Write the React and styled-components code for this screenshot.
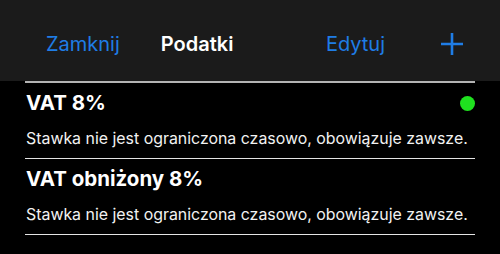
import styled, { createGlobalStyle } from 'styled-components';

const GlobalStyle = createGlobalStyle`
  html, body {
    margin: 0;
    padding: 0;
    background: #000000;
  }
  body {
    font-family: Inter, 'Noto Sans', sans-serif;
    -webkit-font-smoothing: antialiased;
  }
`;

const Page = styled.div`
  width: 500px;
  height: 254px;
  background: #000000;
  overflow: hidden;
`;

const NavBar = styled.div`
  height: 81px;
  box-sizing: border-box;
  padding: 6px 37px 0 46px;
  background: #1b1b1b;
  display: flex;
  align-items: center;
`;

const NavButton = styled.button`
  background: none;
  border: none;
  padding: 0;
  margin-left: ${p => p.$gap || 0};
  font-family: inherit;
  font-size: 20px;
  line-height: 24px;
  color: #1f7de6;
  cursor: pointer;
  display: flex;
  align-items: center;
`;

const NavTitle = styled.div`
  margin-left: 41px;
  margin-right: auto;
  font-size: 20px;
  line-height: 24px;
  font-weight: 600;
  color: #ffffff;
`;

const List = styled.div`
  margin: 0 25px;
  border-top: 2px solid #b4b4b4;
`;

const Row = styled.div`
  padding: 8px 0 9px 1px;
  border-bottom: 1.5px solid #e4e4e4;
`;

const RowHead = styled.div`
  display: flex;
  align-items: center;
  justify-content: space-between;
`;

const RowTitle = styled.div`
  font-size: 20.5px;
  line-height: 24px;
  font-weight: 700;
  color: #ffffff;
`;

const StatusDot = styled.span`
  width: 15px;
  height: 15px;
  border-radius: 50%;
  background: #1fe11f;
`;

const RowText = styled.div`
  margin-top: 14px;
  font-size: 15.9px;
  line-height: 20px;
  color: #f2f2f2;
  white-space: nowrap;
`;

const PlusIcon = () => (
  <svg width="22" height="22" viewBox="0 0 22 22">
    <path d="M11 0v22M0 11h22" stroke="#1f7de6" strokeWidth="2.6" fill="none" />
  </svg>
);

const rates = [
  { name: 'VAT 8%', active: true },
  { name: 'VAT obniżony 8%', active: false },
];

export default function App() {
  return (
    <Page>
      <GlobalStyle />
      <NavBar>
        <NavButton>Zamknij</NavButton>
        <NavTitle>Podatki</NavTitle>
        <NavButton>Edytuj</NavButton>
        <NavButton $gap="56px"><PlusIcon /></NavButton>
      </NavBar>
      <List>
        {rates.map(r => (
          <Row key={r.name}>
            <RowHead>
              <RowTitle>{r.name}</RowTitle>
              {r.active && <StatusDot />}
            </RowHead>
            <RowText>Stawka nie jest ograniczona czasowo, obowiązuje zawsze.</RowText>
          </Row>
        ))}
      </List>
    </Page>
  );
}
